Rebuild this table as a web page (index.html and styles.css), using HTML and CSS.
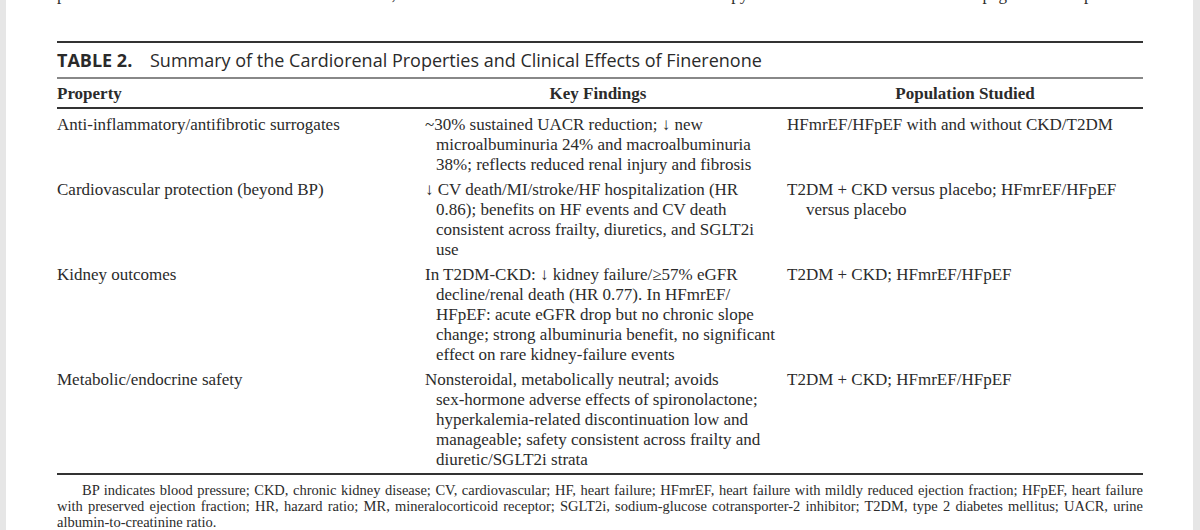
FILE: index.html
```html
<!DOCTYPE html>
<html lang="en">
<head>
    <meta charset="UTF-8">
    <meta name="viewport" content="width=device-width, initial-scale=1.0">
    <title>Table 2 - Finerenone</title>
    <link rel="stylesheet" href="styles.css">
</head>
<body>
    <div class="page">
        <p class="prev-text">presented in the interim statement with results, and the additional benefits of the novel therapy was deemed the most relevant page at the top of the</p>

        <div class="table-block">
            <div class="caption">
                <span class="label">TABLE 2.</span>
                <span>Summary of the Cardiorenal Properties and Clinical Effects of Finerenone</span>
            </div>

            <table class="summary">
                <colgroup>
                    <col class="col-prop">
                    <col class="col-key">
                    <col class="col-pop">
                </colgroup>
                <thead>
                    <tr>
                        <th class="left">Property</th>
                        <th class="key-head">Key Findings</th>
                        <th>Population Studied</th>
                    </tr>
                </thead>
                <tbody>
                    <tr>
                        <td>Anti-inflammatory/antifibrotic surrogates</td>
                        <td class="key">~30% sustained UACR reduction; &darr; new microalbuminuria 24% and macroalbuminuria 38%; reflects reduced renal injury and fibrosis</td>
                        <td class="pop">HFmrEF/HFpEF with and without CKD/T2DM</td>
                    </tr>
                    <tr>
                        <td>Cardiovascular protection (beyond BP)</td>
                        <td class="key">&darr; CV death/MI/stroke/HF hospitalization (HR 0.86); benefits on HF events and CV death consistent across frailty, diuretics, and SGLT2i use</td>
                        <td class="pop">T2DM + CKD versus placebo; HFmrEF/HFpEF versus placebo</td>
                    </tr>
                    <tr>
                        <td>Kidney outcomes</td>
                        <td class="key">In T2DM-CKD: &darr; kidney failure/&ge;57% eGFR decline/renal death (HR 0.77). In HFmrEF/ HFpEF: acute eGFR drop but no chronic slope change; strong albuminuria benefit, no significant effect on rare kidney-failure events</td>
                        <td class="pop">T2DM + CKD; HFmrEF/HFpEF</td>
                    </tr>
                    <tr>
                        <td>Metabolic/endocrine safety</td>
                        <td class="key">Nonsteroidal, metabolically neutral; avoids <span class="nowrap">sex-hormone</span> adverse effects of spironolactone; hyperkalemia-related discontinuation low and manageable; safety consistent across frailty and diuretic/SGLT2i strata</td>
                        <td class="pop">T2DM + CKD; HFmrEF/HFpEF</td>
                    </tr>
                </tbody>
            </table>

            <p class="footnote">BP indicates blood pressure; CKD, chronic kidney disease; CV, cardiovascular; HF, heart failure; HFmrEF, heart failure with mildly reduced ejection fraction; HFpEF, heart failure with preserved ejection fraction; HR, hazard ratio; MR, mineralocorticoid receptor; SGLT2i, sodium-glucose cotransporter-2 inhibitor; T2DM, type 2 diabetes mellitus; UACR, urine albumin-to-creatinine ratio.</p>
        </div>
    </div>
</body>
</html>
```

FILE: styles.css
```css
body {
    margin: 0;
    background-color: #e6e6e6;
    font-family: "Liberation Serif", "Times New Roman", serif;
    color: #2b2b2b;
}

.page {
    background-color: white;
    margin: 0 7px 0 6px;
    height: 530px;
    overflow: hidden;
    padding: 0 50px 0 51px;
}

/* last line of the text above the table, mostly cut off */
.prev-text {
    margin: -15px 0 0;
    font-size: 17px;
    line-height: 20px;
    text-align: justify;
    text-align-last: justify;
}

.table-block {
    margin-top: 36px;
}

.caption {
    border-top: 2px solid #333;
    padding: 5px 0 5px;
    font-family: "Open Sans", "Liberation Sans", sans-serif;
    font-size: 18px;
    line-height: 24px;
    color: #2a2a2a;
}

.caption .label {
    font-weight: bold;
    margin-right: 13px;
}

.summary {
    width: 100%;
    border-collapse: collapse;
    table-layout: fixed;
    font-size: 17px;
    line-height: 20px;
}

.col-prop {
    width: 368px;
}

.col-key {
    width: 362px;
}

.summary thead tr {
    border-top: 2px solid #888;
    border-bottom: 2px solid #333;
}

.summary th {
    padding: 5px 0 3px;
    font-weight: bold;
    text-align: center;
}

.summary th.left {
    text-align: left;
}

.summary th.key-head {
    padding-right: 16px;
}

.summary td {
    vertical-align: top;
    padding: 2px 0 3px;
}

.summary tbody tr:first-child td {
    padding-top: 6px;
}

.summary tbody tr:last-child td {
    padding-bottom: 3px;
}

.summary td.key {
    padding-left: 11px;
    padding-right: 8px;
    text-indent: -11px;
}

.summary td.pop {
    padding-left: 19px;
    text-indent: -19px;
}

.nowrap {
    white-space: nowrap;
}

.footnote {
    border-top: 2px solid #333;
    margin: 0;
    padding-top: 7px;
    font-size: 14.5px;
    line-height: 16px;
    text-indent: 25px;
    text-align: justify;
}
```
